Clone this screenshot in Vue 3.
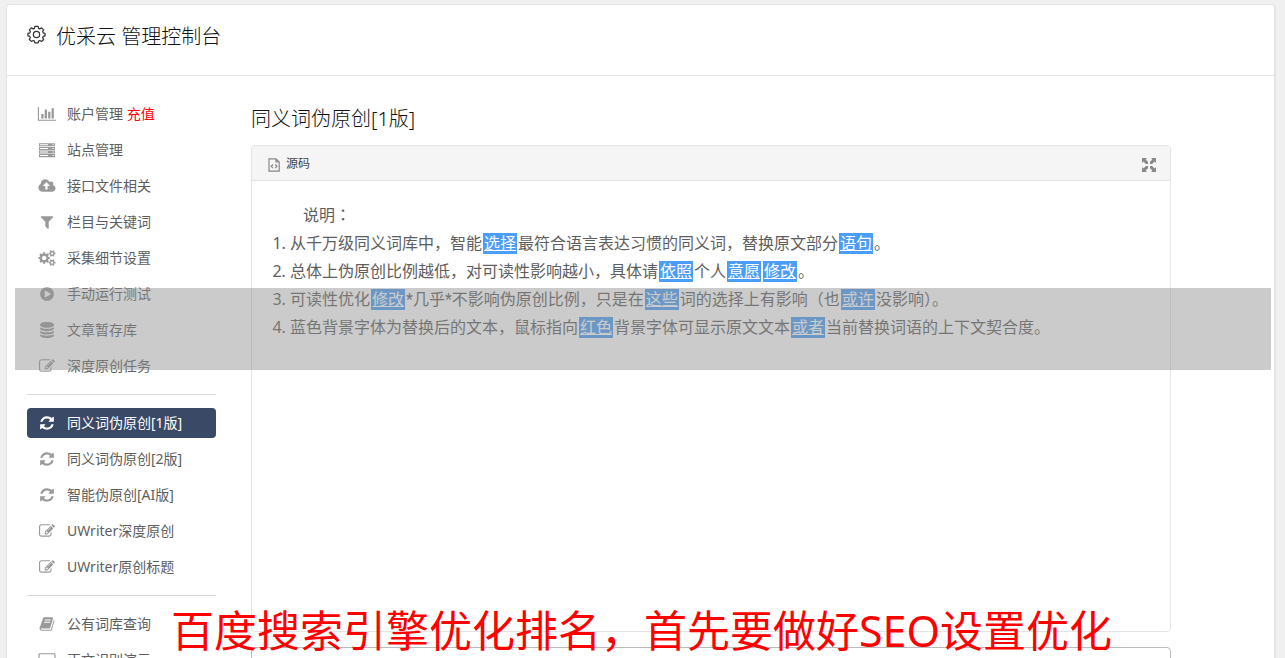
<script setup>
const icons = {
  chart: { x: -96, d: 'M640 896v512h-256v-512h256zM1024 384v1024h-256v-1024h256zM2048 1536v128h-2048v-1536h128v1408h1920zM1408 640v768h-256v-768h256zM1792 256v1152h-256v-1152h256z' },
  server: { x: -224, d: 'M0 144h1792v340H0zM0 548h1792v340H0zM0 952h1792v340H0zM0 1356h1792v340H0zM112 256v112h896V256zM112 660v112h896V660zM112 1064v112h896v-112zM112 1468v112h896v-112zM1520 256v112h144V256zM1520 660v112h144V660zM1520 1064v112h144v-112zM1520 1468v112h144v-112z' },
  cloud: { x: -160, d: 'M1280 864q0-14-9-23l-352-352q-9-9-23-9t-23 9l-351 351q-10 12-10 24 0 14 9 23t23 9h224v352q0 13 9.5 22.5t22.5 9.5h192q13 0 22.5-9.5t9.5-22.5v-352h224q13 0 22.5-9.5t9.5-22.5zm640 288q0 159-112.5 271.5t-271.5 112.5h-1088q-185 0-316.5-131.5t-131.5-316.5q0-130 70-240t188-165q-2-30-2-43 0-212 150-362t362-150q156 0 285.5 87t188.5 231q71-62 166-62 106 0 181 75t75 181q0 76-41 138 130 31 213.5 135.5t83.5 238.5z' },
  filter: { x: -224, d: 'M1595 295q17 41-14 70l-493 493v742q0 42-39 59-13 5-25 5-27 0-45-19l-256-256q-19-19-19-45v-486l-493-493q-31-29-14-70 17-39 59-39h1280q42 0 59 39z' },
  cogs: { x: -160, d: 'M896 896q0-106-75-181t-181-75-181 75-75 181 75 181 181 75 181-75 75-181zm768 512q0-52-38-90t-90-38-90 38-38 90q0 53 37.5 90.5t90.5 37.5 90.5-37.5 37.5-90.5zm0-1024q0-52-38-90t-90-38-90 38-38 90q0 53 37.5 90.5t90.5 37.5 90.5-37.5 37.5-90.5zm-384 421v185q0 10-7 19.5t-16 10.5l-155 24q-11 35-32 76 34 48 90 115 7 11 7 20 0 12-7 19-23 30-82.5 89.5t-78.5 59.5q-11 0-21-7l-115-90q-37 19-77 31-11 108-23 155-7 24-30 24h-186q-11 0-20-7.5t-10-17.5l-23-153q-34-10-75-31l-118 89q-7 7-20 7-11 0-21-8-144-133-144-160 0-9 7-19 10-14 41-53t47-61q-23-44-35-82l-152-24q-10-1-17-9.5t-7-19.5v-185q0-10 7-19.5t16-10.5l155-24q11-35 32-76-34-48-90-115-7-11-7-20 0-12 7-20 22-30 82-89t79-59q11 0 21 7l115 90q34-18 77-32 11-108 23-154 7-24 30-24h186q11 0 20 7.5t10 17.5l23 153q34 10 75 31l118-89q8-7 20-7 11 0 21 8 144 133 144 160 0 8-7 19-12 16-42 54t-45 60q23 48 34 82l152 23q10 2 17 10.5t7 19.5zm640 533v140q0 16-149 31-12 27-30 52 51 113 51 138 0 4-4 7-122 71-124 71-8 0-46-47t-52-68q-20 2-30 2t-30-2q-14 21-52 68t-46 47q-2 0-124-71-4-3-4-7 0-25 51-138-18-25-30-52-149-15-149-31v-140q0-16 149-31 13-29 30-52-51-113-51-138 0-4 4-7 4-2 35-20t59-34 30-16q8 0 46 46.5t52 67.5q20-2 30-2t30 2q51-71 92-112l6-2q4 0 124 70 4 3 4 7 0 25-51 138 17 23 30 52 149 15 149 31zm0-1024v140q0 16-149 31-12 27-30 52 51 113 51 138 0 4-4 7-122 71-124 71-8 0-46-47t-52-68q-20 2-30 2t-30-2q-14 21-52 68t-46 47q-2 0-124-71-4-3-4-7 0-25 51-138-18-25-30-52-149-15-149-31v-140q0-16 149-31 13-29 30-52-51-113-51-138 0-4 4-7 4-2 35-20t59-34 30-16q8 0 46 46.5t52 67.5q20-2 30-2t30 2q51-71 92-112l6-2q4 0 124 70 4 3 4 7 0 25-51 138 17 23 30 52 149 15 149 31z' },
  play: { x: -224, d: 'M896 128q209 0 385.5 103t279.5 279.5 103 385.5-103 385.5-279.5 279.5-385.5 103-385.5-103-279.5-279.5-103-385.5 103-385.5 279.5-279.5 385.5-103zm384 823q32-18 32-55t-32-55l-544-320q-31-19-64-1-32 19-32 56v640q0 37 32 56 16 8 32 8 17 0 32-9z' },
  database: { x: -224, d: 'M896 768q237 0 443-43t325-127v170q0 69-103 128t-280 93.5-385 34.5-385-34.5-280-93.5-103-128v-170q119 84 325 127t443 43zm0 768q237 0 443-43t325-127v170q0 69-103 128t-280 93.5-385 34.5-385-34.5-280-93.5-103-128v-170q119 84 325 127t443 43zm0-384q237 0 443-43t325-127v170q0 69-103 128t-280 93.5-385 34.5-385-34.5-280-93.5-103-128v-170q119 84 325 127t443 43zm0-1152q208 0 385 34.5t280 93.5 103 128v128q0 69-103 128t-280 93.5-385 34.5-385-34.5-280-93.5-103-128v-128q0-69 103-128t280-93.5 385-34.5z' },
  edit: { x: -224, d: 'M888 1184l116-116-152-152-116 116v56h96v96h56zm440-720q-16-16-33 1l-350 350q-17 17-1 33t33-1l350-350q17-17 1-33zm80 594v190q0 119-84.5 203.5t-203.5 84.5h-832q-119 0-203.5-84.5t-84.5-203.5v-832q0-119 84.5-203.5t203.5-84.5h832q63 0 117 25 15 7 18 23 3 17-9 29l-49 49q-14 14-32 8-23-6-45-6h-832q-66 0-113 47t-47 113v832q0 66 47 113t113 47h832q66 0 113-47t47-113v-126q0-13 9-22l64-64q15-15 35-7t20 29zm-96-738l288 288-672 672h-288v-288zm444 132l-92 92-288-288 92-92q28-28 68-28t68 28l152 152q28 28 28 68t-28 68z' },
  refresh: { x: -224, d: 'M1639 1056q0 5-1 7-64 268-268 434.5t-478 166.5q-146 0-282.5-55t-243.5-157l-129 129q-19 19-45 19t-45-19-19-45v-448q0-26 19-45t45-19h448q26 0 45 19t19 45-19 45l-137 137q71 66 161 102t187 36q134 0 250-65t186-179q11-17 53-117 8-23 30-23h192q13 0 22.5 9.5t9.5 22.5zm25-800v448q0 26-19 45t-45 19h-448q-26 0-45-19t-19-45 19-45l138-138q-148-137-349-137-134 0-250 65t-186 179q-11 17-53 117-8 23-30 23h-199q-13 0-22.5-9.5t-9.5-22.5v-7q65-268 270-434.5t480-166.5q146 0 284 55.5t245 156.5l130-129q19-19 45-19t45 19 19 45z' },
  book: { x: -224, d: 'M1703 478q40 57 18 129l-275 906q-19 64-76.5 107.5t-122.5 43.5h-923q-77 0-148.5-53.5t-99.5-131.5q-24-67-2-127 0-4 3-27t4-37q1-8-3-21.5t-3-19.5q2-11 8-21t16.5-23.5 16.5-23.5q23-38 45-91.5t30-91.5q3-10 .5-30t-.5-28q3-11 17-28t17-23q21-36 42-92t25-90q1-9-2.5-32t.5-28q4-13 22-30.5t22-22.5q19-26 42.5-84.5t27.5-96.5q1-8-3-25.5t-2-26.5q2-8 9-18t18-23 17-21q8-12 16.5-30.5t15-35 16-36 19.5-32 26.5-23.5 36-11.5 47.5 5.5l-1 3q38-9 51-9h761q74 0 114 56t18 130l-274 906q-36 119-71.5 153.5t-128.5 34.5h-869q-27 0-38 15-11 16-1 43 24 70 144 70h923q29 0 56-15.5t35-41.5l300-987q7-22 5-57 38 15 59 43zm-1064 2q-4 13 2 22.5t20 9.5h608q13 0 25.5-9.5t16.5-22.5l21-64q4-13-2-22.5t-20-9.5h-608q-13 0-25.5 9.5t-16.5 22.5zm-83 256q-4 13 2 22.5t20 9.5h608q13 0 25.5-9.5t16.5-22.5l21-64q4-13-2-22.5t-20-9.5h-608q-13 0-25.5 9.5t-16.5 22.5z' },
  desktop: { x: -160, d: 'M160 128h1600q160 0 160 160v1000q0 160-160 160H1200v120q80 60 80 96H640q0-36 80-96v-120H160Q0 1448 0 1288V288q0-160 160-160zm32 128q-64 0-64 64v768h1664V320q0-64-64-64z' },
}

const groups = [
  [
    { icon: 'chart', label: '账户管理', extra: '充值' },
    { icon: 'server', label: '站点管理' },
    { icon: 'cloud', label: '接口文件相关' },
    { icon: 'filter', label: '栏目与关键词' },
    { icon: 'cogs', label: '采集细节设置' },
    { icon: 'play', label: '手动运行测试' },
    { icon: 'database', label: '文章暂存库' },
    { icon: 'edit', label: '深度原创任务' },
  ],
  [
    { icon: 'refresh', label: '同义词伪原创[1版]', active: true },
    { icon: 'refresh', label: '同义词伪原创[2版]' },
    { icon: 'refresh', label: '智能伪原创[AI版]' },
    { icon: 'edit', label: 'UWriter深度原创' },
    { icon: 'edit', label: 'UWriter原创标题' },
  ],
  [
    { icon: 'book', label: '公有词库查询' },
    { icon: 'desktop', label: '正文识别演示' },
  ],
]

// Odd entries of each line are the replaced words.
const lines = [
  ['从千万级同义词库中，智能', '选择', '最符合语言表达习惯的同义词，替换原文部分', '语句', '。'],
  ['总体上伪原创比例越低，对可读性影响越小，具体请', '依照', '个人', '意愿', '', '修改', '。'],
  ['可读性优化', '修改', '*几乎*不影响伪原创比例，只是在', '这些', '词的选择上有影响（也', '或许', '没影响）。'],
  ['蓝色背景字体为替换后的文本，鼠标指向', '红色', '背景字体可显示原文文本', '或者', '当前替换词语的上下文契合度。'],
]
</script>

<template>
  <div class="page">
    <div class="panel">
      <header class="top">
        <svg class="gear" viewBox="0 0 20 20" aria-hidden="true">
          <path d="M8.3 1.5h3.4l.5 2 1.3.6 1.9-1.1 2.1 2.1-1 1.9.5 1.3 2 .5v2.6l-2 .6-.5 1.3 1 1.9-2.1 2.1-1.9-1-1.3.6-.5 1.9H8.3l-.5-1.9-1.3-.6-1.9 1-2.1-2.1 1-1.9-.5-1.3-2-.6V8.8l2-.5.5-1.3-1-1.9L4.600 3l1.9 1.100 1.300-.6z" />
          <circle cx="10" cy="10" r="3.3" />
        </svg>
        <h1>优采云 管理控制台</h1>
      </header>
      <div class="body">
        <nav class="side">
          <ul v-for="(group, g) in groups" :key="g">
            <li v-for="item in group" :key="item.label">
              <a href="#" :class="{ active: item.active }">
                <svg :viewBox="`${icons[item.icon].x} 0 2240 1792`" aria-hidden="true">
                  <path fill-rule="evenodd" :d="icons[item.icon].d" />
                </svg>
                <span>{{ item.label }} <em v-if="item.extra">{{ item.extra }}</em></span>
              </a>
            </li>
          </ul>
        </nav>
        <main>
          <h2>同义词伪原创[1版]</h2>
          <section class="editor">
            <div class="toolbar">
              <button type="button" class="source">
                <svg viewBox="0 0 12 14" aria-hidden="true">
                  <path d="M1 .8h7l3.2 3.2v9.2H1zM8 1v3h3" />
                  <path d="M5 6.5L3.2 8.3 5 10.1M7.2 6.5L9 8.3l-1.8 1.8" />
                </svg>
                <span>源码</span>
              </button>
              <button type="button" class="expand" aria-label="最大化">
                <svg viewBox="0 0 14 14" aria-hidden="true">
                  <path d="M0 0h5L3.6 1.4 6 3.8V6H4L1.4 3.6 0 5zM14 0v5l-1.4-1.4L10 6H8V3.8l2.4-2.4L9 0zM0 14V9l1.4 1.4L4 8h2v2.2l-2.4 2.4L5 14zM14 14H9l1.4-1.4L8 10.2V8h2l2.6 2.4L14 9z" />
                </svg>
              </button>
            </div>
            <div class="doc">
              <p>说明<span class="colon">：</span></p>
              <ol>
                <li v-for="(line, i) in lines" :key="i"><template v-for="(part, j) in line" :key="j"><u v-if="j % 2">{{ part }}</u><template v-else>{{ part }}</template></template></li>
              </ol>
            </div>
          </section>
          <textarea class="next" aria-label="原文"></textarea>
        </main>
      </div>
    </div>
    <div class="band"></div>
    <div class="caption">百度搜索引擎优化排名，首先要做好SEO设置优化</div>
  </div>
</template>

<style>
body {
  background: #f0f0f0;
}
</style>

<style scoped>
* {
  box-sizing: border-box;
}
.page {
  position: relative;
  height: 100vh;
  overflow: hidden;
  padding: 4px 9px 0 6px;
  color: #5e5e5e;
  font-family: "Noto Sans", "Noto Sans CJK SC", sans-serif;
}
.panel {
  min-height: 100vh;
  background: #fff;
  border: 1px solid #e4e4e4;
  border-right-width: 2px;
  border-radius: 4px;
}
.top {
  display: flex;
  gap: 10px;
  height: 71px;
  padding: 17px 20px 0;
  border-bottom: 1px solid #e4e4e4;
}
.gear {
  width: 19px;
  height: 19px;
  margin-top: 3px;
  fill: none;
  stroke: #333;
  stroke-width: 1.3;
  stroke-linejoin: round;
}
h1,
h2 {
  margin: 0;
  color: #111;
  font-size: 20px;
  line-height: 30px;
  font-weight: 300;
}
.body {
  display: grid;
  grid-template-columns: 189px minmax(0, 1fr);
  gap: 35px;
  padding: 23px 103px 0 20px;
}
ul {
  display: grid;
  gap: 6px;
  margin: 0;
  padding: 0;
  list-style: none;
}
ul + ul {
  margin-top: 13px;
  padding-top: 13px;
  border-top: 1px solid #d9d9d9;
}
.side a {
  display: flex;
  align-items: center;
  gap: 10px;
  height: 30px;
  padding: 0 10px;
  border-radius: 4px;
  color: #5e5e5e;
  font-size: 14px;
  line-height: 30px;
  text-decoration: none;
  white-space: nowrap;
}
.side svg {
  width: 20px;
  height: 16px;
  fill: #999;
}
.side em {
  color: #f00;
  font-style: normal;
}
.side a.active {
  background: #3a4a66;
  color: #fff;
}
.side .active svg {
  fill: #fff;
}
h2 {
  margin: 5px 0 11px;
}
.editor {
  min-height: 487px;
  border: 1px solid #e4e4e4;
  border-radius: 4px;
}
.toolbar {
  display: flex;
  justify-content: space-between;
  height: 35px;
  padding: 8px 14px 0 16px;
  background: #f5f5f5;
  border-bottom: 1px solid #e4e4e4;
  border-radius: 3px 3px 0 0;
}
button {
  display: flex;
  align-items: flex-start;
  padding: 0;
  border: 0;
  background: none;
  color: #444;
  font: inherit;
  font-size: 12px;
  line-height: 20px;
}
.source {
  gap: 6px;
}
.source svg {
  width: 12px;
  height: 14px;
  margin-top: 4px;
  fill: none;
  stroke: #888;
  stroke-width: 1.2;
}
.expand svg {
  width: 14px;
  height: 14px;
  margin-top: 4px;
  fill: #888;
}
.doc {
  padding: 19px 19px 20px;
  font-size: 16px;
  line-height: 28px;
}
p {
  margin: 0;
  padding-left: 32px;
}
.colon {
  font-family: "Noto Sans CJK JP", sans-serif;
}
ol {
  margin: 0;
  padding-left: 19px;
  font-family: Roboto, "Noto Sans CJK SC", sans-serif;
}
ol li {
  height: 28px;
  white-space: nowrap;
}
ol li::marker {
  font-family: "Noto Sans", sans-serif;
}
u {
  display: inline-block;
  height: 21px;
  margin: 0 1px;
  padding: 0 1px;
  background: #4a9df8;
  color: #fff;
  line-height: 21px;
}
.next {
  display: block;
  width: 100%;
  height: 120px;
  margin-top: 15px;
  border: 1px solid #bbb;
  border-radius: 4px;
  resize: none;
}
.band {
  position: absolute;
  top: 288px;
  left: 15px;
  right: 14px;
  height: 82px;
  background: rgba(145, 145, 145, 0.47);
}
.caption {
  position: absolute;
  left: 171px;
  bottom: 0;
  color: #f00;
  font-size: 43px;
  line-height: 54px;
  white-space: nowrap;
}
</style>
